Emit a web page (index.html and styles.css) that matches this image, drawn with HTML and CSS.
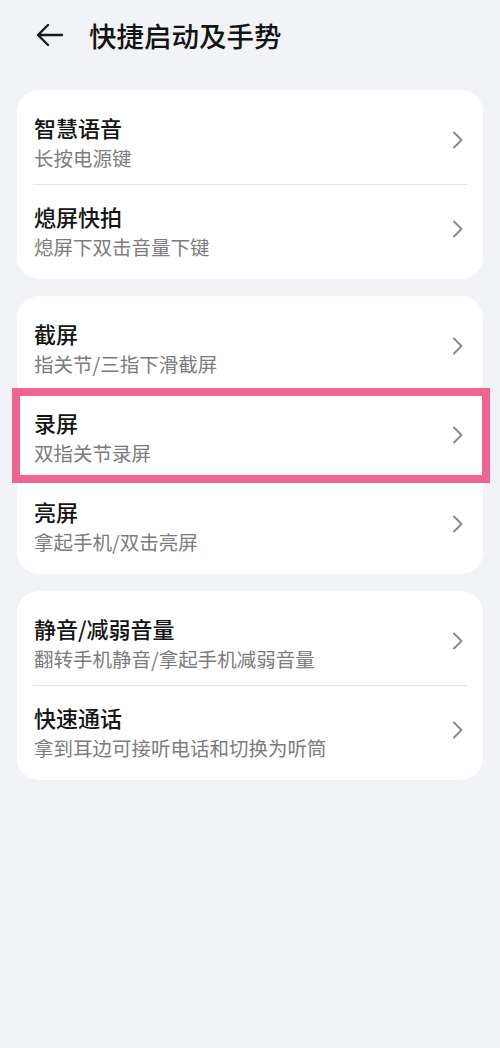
FILE: index.html
```html
<!DOCTYPE html>
<html lang="zh-CN">
<head>
<meta charset="utf-8">
<title>快捷启动及手势</title>
<link rel="stylesheet" href="styles.css">
</head>
<body>
<div class="page">
  <header class="header">
    <svg class="back" width="28" height="24" viewBox="0 0 28 24" fill="none" stroke="#1a1a1a" stroke-width="2.4" stroke-linecap="round" stroke-linejoin="round">
      <path d="M26 12H2M12 2L2 12l10 10"/>
    </svg>
    <h1 class="title">快捷启动及手势</h1>
  </header>

  <section class="card">
    <div class="row">
      <div class="text"><div class="name">智慧语音</div><div class="desc">长按电源键</div></div>
      <svg class="chev" width="12" height="18" viewBox="0 0 12 18" fill="none" stroke="#8a8a8a" stroke-width="2" stroke-linecap="round" stroke-linejoin="round"><path d="M2 1.5l7.5 7.5L2 16.5"/></svg>
    </div>
    <div class="divider"></div>
    <div class="row">
      <div class="text"><div class="name">熄屏快拍</div><div class="desc">熄屏下双击音量下键</div></div>
      <svg class="chev" width="12" height="18" viewBox="0 0 12 18" fill="none" stroke="#8a8a8a" stroke-width="2" stroke-linecap="round" stroke-linejoin="round"><path d="M2 1.5l7.5 7.5L2 16.5"/></svg>
    </div>
  </section>

  <section class="card">
    <div class="row">
      <div class="text"><div class="name">截屏</div><div class="desc">指关节/三指下滑截屏</div></div>
      <svg class="chev" width="12" height="18" viewBox="0 0 12 18" fill="none" stroke="#8a8a8a" stroke-width="2" stroke-linecap="round" stroke-linejoin="round"><path d="M2 1.5l7.5 7.5L2 16.5"/></svg>
    </div>
    <div class="divider"></div>
    <div class="row highlighted">
      <div class="text"><div class="name">录屏</div><div class="desc">双指关节录屏</div></div>
      <svg class="chev" width="12" height="18" viewBox="0 0 12 18" fill="none" stroke="#8a8a8a" stroke-width="2" stroke-linecap="round" stroke-linejoin="round"><path d="M2 1.5l7.5 7.5L2 16.5"/></svg>
      <div class="mark"></div>
    </div>
    <div class="divider"></div>
    <div class="row">
      <div class="text"><div class="name">亮屏</div><div class="desc">拿起手机/双击亮屏</div></div>
      <svg class="chev" width="12" height="18" viewBox="0 0 12 18" fill="none" stroke="#8a8a8a" stroke-width="2" stroke-linecap="round" stroke-linejoin="round"><path d="M2 1.5l7.5 7.5L2 16.5"/></svg>
    </div>
  </section>

  <section class="card">
    <div class="row">
      <div class="text"><div class="name">静音/减弱音量</div><div class="desc">翻转手机静音/拿起手机减弱音量</div></div>
      <svg class="chev" width="12" height="18" viewBox="0 0 12 18" fill="none" stroke="#8a8a8a" stroke-width="2" stroke-linecap="round" stroke-linejoin="round"><path d="M2 1.5l7.5 7.5L2 16.5"/></svg>
    </div>
    <div class="divider"></div>
    <div class="row">
      <div class="text"><div class="name">快速通话</div><div class="desc">拿到耳边可接听电话和切换为听筒</div></div>
      <svg class="chev" width="12" height="18" viewBox="0 0 12 18" fill="none" stroke="#8a8a8a" stroke-width="2" stroke-linecap="round" stroke-linejoin="round"><path d="M2 1.5l7.5 7.5L2 16.5"/></svg>
    </div>
  </section>
</div>
</body>
</html>
```

FILE: styles.css
```css
* { box-sizing: border-box; }
html, body {
  margin: 0;
  padding: 0;
  background: #f1f3f6;
  font-family: "Noto Sans CJK SC", "Noto Sans", sans-serif;
  color: #141414;
}
.page {
  width: 500px;
  min-height: 1048px;
  padding: 0 17px;
  display: flex;
  flex-direction: column;
  gap: 17px;
}
.header {
  height: 73px;
  display: flex;
  align-items: center;
  gap: 25px;
  padding-left: 19px;
  padding-bottom: 4px;
}
.back { display: block; }
.title {
  margin: 0;
  font-size: 27.5px;
  font-weight: 500;
  line-height: 36px;
  color: #141414;
}
.card {
  background: #ffffff;
  border-radius: 22px;
  padding: 6px 0;
}
.row {
  position: relative;
  height: 88px;
  display: flex;
  align-items: center;
  justify-content: space-between;
  padding: 0 19px 0 17px;
}
.text {
  display: flex;
  flex-direction: column;
  padding-top: 3px;
}
.name {
  font-size: 22px;
  font-weight: 500;
  line-height: 30px;
  color: #141414;
}
.desc {
  font-size: 19.5px;
  line-height: 28px;
  color: #7c7c7c;
  margin-top: 2px;
}
.chev { display: block; flex: none; }
.divider {
  height: 1px;
  background: #e6e6e6;
  margin: 0 16px;
}
.mark {
  position: absolute;
  left: -5px;
  right: -7px;
  top: -3px;
  bottom: -4px;
  border: 8px solid #f0658f;
  pointer-events: none;
}
```
